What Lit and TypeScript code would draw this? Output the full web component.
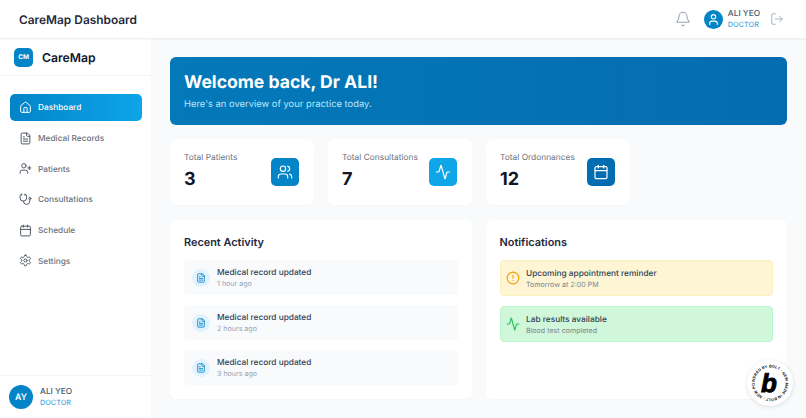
import { LitElement, html, css, svg } from "lit";
import { customElement } from "lit/decorators.js";

const ic = (paths: unknown, size = 12, sw = 2) => html`<svg width=${size} height=${size} viewBox="0 0 24 24" fill="none" stroke="currentColor" stroke-width=${sw} stroke-linecap="round" stroke-linejoin="round">${paths}</svg>`;

const P = {
  home: svg`<path d="M15 21v-8a1 1 0 0 0-1-1h-4a1 1 0 0 0-1 1v8"/><path d="M3 10a2 2 0 0 1 .709-1.528l7-5.999a2 2 0 0 1 2.582 0l7 5.999A2 2 0 0 1 21 10v9a2 2 0 0 1-2 2H5a2 2 0 0 1-2-2z"/>`,
  file: svg`<path d="M15 2H6a2 2 0 0 0-2 2v16a2 2 0 0 0 2 2h12a2 2 0 0 0 2-2V7Z"/><path d="M14 2v4a2 2 0 0 0 2 2h4"/><path d="M10 9H8"/><path d="M16 13H8"/><path d="M16 17H8"/>`,
  userPlus: svg`<path d="M16 21v-2a4 4 0 0 0-4-4H6a4 4 0 0 0-4 4v2"/><circle cx="9" cy="7" r="4"/><line x1="19" x2="19" y1="8" y2="14"/><line x1="22" x2="16" y1="11" y2="11"/>`,
  steth: svg`<path d="M11 2v2"/><path d="M5 2v2"/><path d="M5 3H4a2 2 0 0 0-2 2v4a6 6 0 0 0 12 0V5a2 2 0 0 0-2-2h-1"/><path d="M8 15a6 6 0 0 0 12 0v-3"/><circle cx="20" cy="10" r="2"/>`,
  cal: svg`<path d="M8 2v4"/><path d="M16 2v4"/><rect width="18" height="18" x="3" y="4" rx="2"/><path d="M3 10h18"/>`,
  gear: svg`<path d="M12.22 2h-.44a2 2 0 0 0-2 2v.18a2 2 0 0 1-1 1.73l-.43.25a2 2 0 0 1-2 0l-.15-.08a2 2 0 0 0-2.73.73l-.22.38a2 2 0 0 0 .73 2.73l.15.1a2 2 0 0 1 1 1.72v.51a2 2 0 0 1-1 1.74l-.15.09a2 2 0 0 0-.73 2.73l.22.38a2 2 0 0 0 2.73.73l.15-.08a2 2 0 0 1 2 0l.43.25a2 2 0 0 1 1 1.73V20a2 2 0 0 0 2 2h.44a2 2 0 0 0 2-2v-.18a2 2 0 0 1 1-1.73l.43-.25a2 2 0 0 1 2 0l.15.08a2 2 0 0 0 2.73-.73l.22-.39a2 2 0 0 0-.73-2.73l-.15-.08a2 2 0 0 1-1-1.74v-.5a2 2 0 0 1 1-1.74l.15-.09a2 2 0 0 0 .73-2.73l-.22-.38a2 2 0 0 0-2.73-.73l-.15.08a2 2 0 0 1-2 0l-.43-.25a2 2 0 0 1-1-1.73V4a2 2 0 0 0-2-2z"/><circle cx="12" cy="12" r="3"/>`,
  bell: svg`<path d="M10.268 21a2 2 0 0 0 3.464 0"/><path d="M3.262 15.326A1 1 0 0 0 4 17h16a1 1 0 0 0 .74-1.673C19.41 13.956 18 12.499 18 8A6 6 0 0 0 6 8c0 4.499-1.411 5.956-2.738 7.326"/>`,
  user: svg`<path d="M19 21v-2a4 4 0 0 0-4-4H9a4 4 0 0 0-4 4v2"/><circle cx="12" cy="7" r="4"/>`,
  logout: svg`<path d="M9 21H5a2 2 0 0 1-2-2V5a2 2 0 0 1 2-2h4"/><polyline points="16 17 21 12 16 7"/><line x1="21" x2="9" y1="12" y2="12"/>`,
  users: svg`<path d="M16 21v-2a4 4 0 0 0-4-4H6a4 4 0 0 0-4 4v2"/><circle cx="9" cy="7" r="4"/><path d="M22 21v-2a4 4 0 0 0-3-3.87"/><path d="M16 3.13a4 4 0 0 1 0 7.75"/>`,
  activity: svg`<path d="M22 12h-2.48a2 2 0 0 0-1.93 1.46l-2.35 8.36a.25.25 0 0 1-.48 0L9.24 2.18a.25.25 0 0 0-.48 0l-2.35 8.36A2 2 0 0 1 4.49 12H2"/>`,
  alert: svg`<circle cx="12" cy="12" r="10"/><line x1="12" x2="12" y1="8" y2="12"/><line x1="12" x2="12.01" y1="16" y2="16"/>`,
};

const nav = [
  ["Dashboard", P.home, true],
  ["Medical Records", P.file, false],
  ["Patients", P.userPlus, false],
  ["Consultations", P.steth, false],
  ["Schedule", P.cal, false],
  ["Settings", P.gear, false],
] as const;

const stats = [
  ["Total Patients", "3", P.users, "c1"],
  ["Total Consultations", "7", P.activity, "c2"],
  ["Total Ordonnances", "12", P.cal, "c3"],
] as const;

const activity = ["1 hour ago", "2 hours ago", "3 hours ago"];

@customElement("app-root")
export class AppRoot extends LitElement {
  static styles = css`
    :host { display: block; height: 418px; overflow: hidden; position: relative; font-family: Inter, "Liberation Sans", sans-serif; background: #f8fafc; color: #0f172a; text-rendering: geometricPrecision; }
    * { box-sizing: border-box; }
    svg { display: block; flex: none; }
    .top { height: 39px; background: #fff; border-bottom: 1px solid #eef1f5; display: flex; align-items: center; padding: 0 22px 0 19px; box-shadow: 0 1px 1px rgba(15,23,42,.03); position: relative; z-index: 2; }
    .top h1 { margin: 0; font-size: 11.9px; font-weight: 600; color: #1e293b; flex: 1; }
    .bell { color: #94a3b8; margin-right: 13px; }
    .who { display: flex; align-items: center; gap: 5px; margin-right: 10px; }
    .ava { width: 19px; height: 19px; border-radius: 50%; background: #0284c7; color: #fff; display: flex; align-items: center; justify-content: center; }
    .names { line-height: 10.5px; padding-top: 1px; }
    .nm { font-size: 8.3px; font-weight: 500; color: #475569; }
    .rl { font-size: 7.3px; font-weight: 500; color: #4aa9de; }
    .out { color: #a3aebd; }
    .body { display: flex; height: 379px; }
    aside { width: 151px; background: #fff; display: flex; flex-direction: column; flex: none; }
    .brand { height: 37px; display: flex; align-items: center; gap: 9px; padding-left: 14px; border-bottom: 1px solid #f1f5f9; }
    .mark { width: 19px; height: 19px; border-radius: 5px; background: #0284c7; color: #fff; font-size: 6.4px; font-weight: 700; display: flex; align-items: center; justify-content: center; }
    .brand b { font-size: 12.2px; font-weight: 600; color: #0f172a; }
    nav { flex: 1; padding: 18px 9.5px 0; display: flex; flex-direction: column; gap: 3.7px; }
    .item { height: 27px; display: flex; align-items: center; gap: 6px; padding: 0 9.5px; border-radius: 5px; font-size: 8.3px; font-weight: 500; color: #6b7280; }
    .item span { padding-top: 1.5px; }
    .item svg { color: #4b5563; }
    .item.on { background: linear-gradient(90deg, #0284c7, #0ea5e9); color: #fff; }
    .item.on svg { color: #fff; }
    .foot { height: 43px; border-top: 1px solid #f1f5f9; display: flex; align-items: center; gap: 7px; padding-left: 9px; }
    .foot .av2 { width: 24px; height: 24px; border-radius: 50%; background: #0284c7; color: #fff; font-size: 8.8px; font-weight: 600; display: flex; align-items: center; justify-content: center; }
    main { flex: 1; padding: 18px 19px 0 19px; display: flex; flex-direction: column; gap: 14px; min-width: 0; }
    .hero { height: 68px; border-radius: 6px; background: linear-gradient(90deg, #0379b9, #046cb0 100%); color: #fff; padding: 14px 14px; }
    .hero h2 { margin: 0; font-size: 17.6px; line-height: 23px; font-weight: 700; }
    .hero p { margin: 5px 0 0; font-size: 9.4px; line-height: 11px; color: #bae6fd; }
    .stats { display: flex; gap: 14px; }
    .stat { width: 144px; height: 66px; background: #fff; border-radius: 6px; padding: 0 15px 0 14px; display: flex; align-items: center; justify-content: space-between; box-shadow: 0 1px 2px rgba(15,23,42,.02); }
    .stat .l { font-size: 8.4px; color: #6b7280; line-height: 11px; }
    .stat .v { font-size: 18px; font-weight: 700; line-height: 23px; margin-top: 4px; color: #0f172a; }
    .tile { width: 28px; height: 28px; border-radius: 5px; color: #fff; display: flex; align-items: center; justify-content: center; }
    .c1 { background: #0284c7; } .c2 { background: #0ea5e9; } .c3 { background: #046cb0; }
    .panels { display: flex; gap: 14px; margin-top: 1px; }
    .panel { flex: 1; height: 179px; background: #fff; border-radius: 6px; padding: 15px 14px; box-shadow: 0 1px 2px rgba(15,23,42,.02); }
    .panel h3 { margin: 0 0 11px; font-size: 10.9px; line-height: 14px; font-weight: 600; color: #1e293b; }
    .list { display: flex; flex-direction: column; gap: 10px; }
    .row { height: 35px; background: #f8fafc; border-radius: 4px; display: flex; align-items: center; gap: 7px; padding: 0 8px; }
    .dot { width: 18px; height: 18px; border-radius: 50%; background: #e0f2fe; color: #0284c7; display: flex; align-items: center; justify-content: center; }
    .txt { padding-top: 2px; }
    .t { font-size: 8.3px; font-weight: 500; line-height: 11px; color: #334155; }
    .s { font-size: 7.1px; line-height: 9.5px; color: #94a3b8; }
    .note { height: 36px; border-radius: 4px; display: flex; align-items: center; gap: 6px; padding: 0 5.5px; border: 1px solid; }
    .note.y { background: #fdf5d3; border-color: #fcefc0; color: #f59e0b; }
    .note.g { background: #d0f7d9; border-color: #bbf7d0; color: #22c55e; }
    .note .s { color: #7b8794; }
    .badge { position: absolute; right: 13px; bottom: 12px; width: 46px; height: 46px; border-radius: 50%; background: #fff; box-shadow: 0 1px 4px rgba(15,23,42,.12); }
    .badge svg text.ring { font-family: "Liberation Sans", sans-serif; font-size: 3.9px; font-weight: 700; fill: #111; }
    .badge svg text.b { font-family: "Liberation Sans", sans-serif; font-size: 26px; font-weight: 700; font-style: italic; fill: #000; stroke: #000; stroke-width: .9px; text-anchor: middle; }
  `;

  render() {
    return html`
      <div class="top">
        <h1>CareMap Dashboard</h1>
        <span class="bell">${ic(P.bell, 16, 1.6)}</span>
        <div class="who">
          <span class="ava">${ic(P.user, 13)}</span>
          <div class="names"><div class="nm">ALI YEO</div><div class="rl">DOCTOR</div></div>
        </div>
        <span class="out">${ic(P.logout, 14, 1.6)}</span>
      </div>
      <div class="body">
        <aside>
          <div class="brand"><span class="mark">CM</span><b>CareMap</b></div>
          <nav>
            ${nav.map(([l, p, on]) => html`<div class="item ${on ? "on" : ""}">${ic(p, 13, 1.8)}<span>${l}</span></div>`)}
          </nav>
          <div class="foot">
            <span class="av2">AY</span>
            <div class="names"><div class="nm">ALI YEO</div><div class="rl">DOCTOR</div></div>
          </div>
        </aside>
        <main>
          <section class="hero">
            <h2>Welcome back, Dr ALI!</h2>
            <p>Here's an overview of your practice today.</p>
          </section>
          <section class="stats">
            ${stats.map(([l, v, p, c]) => html`<div class="stat"><div><div class="l">${l}</div><div class="v">${v}</div></div><span class="tile ${c}">${ic(p, 16, 1.8)}</span></div>`)}
          </section>
          <section class="panels">
            <div class="panel">
              <h3>Recent Activity</h3>
              <div class="list">
                ${activity.map((a) => html`<div class="row"><span class="dot">${ic(P.file, 10)}</span><div class="txt"><div class="t">Medical record updated</div><div class="s">${a}</div></div></div>`)}
              </div>
            </div>
            <div class="panel">
              <h3>Notifications</h3>
              <div class="list">
                <div class="note y">${ic(P.alert, 14, 2)}<div class="txt"><div class="t">Upcoming appointment reminder</div><div class="s">Tomorrow at 2:00 PM</div></div></div>
                <div class="note g">${ic(P.activity, 14, 2)}<div class="txt"><div class="t">Lab results available</div><div class="s">Blood test completed</div></div></div>
              </div>
            </div>
          </section>
        </main>
      </div>
      <div class="badge">
        <svg width="46" height="46" viewBox="0 0 46 46">
          <defs><path id="rg" transform="rotate(-20 23 23)" d="M7.5 23a15.5 15.5 0 1 1 31 0a15.5 15.5 0 1 1 -31 0"/></defs>
          <text class="ring"><textPath href="#rg" textLength="95" lengthAdjust="spacing">POWERED BY BOLT · NEW MADE IN BOLT · NEW</textPath></text>
          <text class="b" x="22" y="31.5">b</text>
        </svg>
      </div>
    `;
  }
}
